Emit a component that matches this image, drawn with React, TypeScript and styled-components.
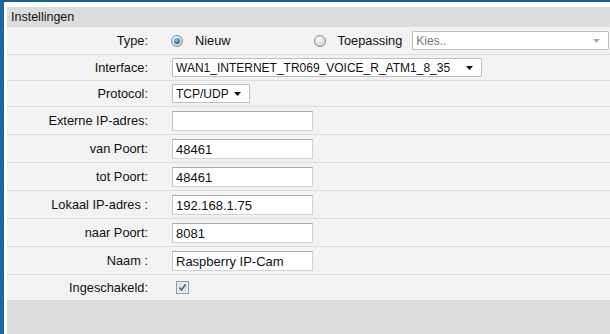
import React from "react";
import styled, { createGlobalStyle } from "styled-components";

const GlobalStyle = createGlobalStyle`
    html, body {
        margin: 0;
        padding: 0;
        background: #fff;
        font-family: Arial, "Liberation Sans", sans-serif;
        font-size: 12.5px;
        color: #111;
    }
`

// form data
const fields = [
    { label: 'Externe IP-adres:', value: '' },
    { label: 'van Poort:', value: '48461' },
    { label: 'tot Poort:', value: '48461' },
    { label: 'Lokaal IP-adres :', value: '192.168.1.75' },
    { label: 'naar Poort:', value: '8081' },
    { label: 'Naam :', value: 'Raspberry IP-Cam' },
]

const Radio = ({ checked }: { checked?: boolean }) => (
    <svg width="12" height="12" viewBox="0 0 12 12">
        <defs>
            <radialGradient id={checked ? "rOn" : "rOff"} cx="0.4" cy="0.35" r="0.7">
                <stop offset="0" stopColor="#ffffff" />
                <stop offset="1" stopColor="#c9c9c9" />
            </radialGradient>
            <radialGradient id="dot" cx="0.4" cy="0.35" r="0.7">
                <stop offset="0" stopColor="#7fd0f5" />
                <stop offset="1" stopColor="#0f5e99" />
            </radialGradient>
        </defs>
        <circle cx="6" cy="6" r="5.5" fill={`url(#${checked ? "rOn" : "rOff"})`} stroke="#8f8f8f" strokeWidth="1" />
        {checked && <circle cx="6" cy="6" r="3" fill="url(#dot)" />}
    </svg>
)

const Caret = ({ color }: { color: string }) => (
    <svg width="7" height="4" viewBox="0 0 7 4">
        <path d="M0 0H7L3.5 4Z" fill={color} />
    </svg>
)

const Check = () => (
    <svg width="13" height="13" viewBox="0 0 13 13">
        <rect x="0.5" y="0.5" width="12" height="12" fill="#e9eef5" stroke="#8e9bb0" />
        <rect x="2" y="2" width="9" height="9" fill="#dde5f0" />
        <path d="M3.5 6.5L5.5 9L9.5 3.5" stroke="#4a6192" strokeWidth="1.6" fill="none" />
    </svg>
)

const App = () => {
    return (
        <>
            <GlobalStyle />
            <Frame>
                <Header>Instellingen</Header>
                <Row height={28}>
                    <Label>Type:</Label>
                    <Control>
                        <RadioItem><Radio checked /><span>Nieuw</span></RadioItem>
                        <RadioItem gap={83}><Radio /><span>Toepassing</span></RadioItem>
                        <Select width={197} muted>
                            <span>Kies..</span>
                            <Caret color="#a8a8a8" />
                        </Select>
                    </Control>
                </Row>
                <Row height={26}>
                    <Label>Interface:</Label>
                    <Control>
                        <Select width={310}>
                            <span>WAN1_INTERNET_TR069_VOICE_R_ATM1_8_35</span>
                            <Caret color="#111" />
                        </Select>
                    </Control>
                </Row>
                <Row height={26}>
                    <Label>Protocol:</Label>
                    <Control>
                        <Select width={78}>
                            <span>TCP/UDP</span>
                            <Caret color="#111" />
                        </Select>
                    </Control>
                </Row>
                {fields.map((item, index) => {
                    return <Row height={28} key={index}>
                        <Label>{item.label}</Label>
                        <Control>
                            <TextInput defaultValue={item.value} />
                        </Control>
                    </Row>
                })}
                <Row height={26}>
                    <Label>Ingeschakeld:</Label>
                    <Control><CheckBox><Check /></CheckBox></Control>
                </Row>
                <Footer />
            </Frame>
        </>
    )
}

const Frame = styled.div`
    border-top: 2px solid #1d5d86;
    border-left: 4px solid #1a6aa0;
    padding: 5px 0 0 3px;
    height: 327px;
    background: #fff;
    display: flex;
    flex-direction: column;
`

const Header = styled.div`
    height: 20px;
    line-height: 20px;
    background: #dcdcdc;
    padding-left: 4px;
    font-size: 12.5px;
    color: #111;
`

const Row = styled.div<{ height: number }>`
    height: ${p => p.height - 1}px;
    border-bottom: 1px solid #dcdcdc;
    background: #f2f2f2;
    display: flex;
    align-items: center;
`

const Label = styled.div`
    flex: 0 0 141px;
    text-align: right;
    font-size: 12.8px;
    color: #111;
`

const Control = styled.div`
    margin-left: 24px;
    display: flex;
    align-items: center;
`

const RadioItem = styled.label<{ gap?: number }>`
    display: flex;
    align-items: center;
    gap: 10px;
    margin-right: ${p => (p.gap ? 10 : 0)}px;
    margin-left: ${p => p.gap ?? -1}px;
    span {
        font-size: 12.8px;
        color: #111;
        margin-left: 2px;
    }
`

const Select = styled.div<{ width: number; muted?: boolean }>`
    box-sizing: border-box;
    flex-shrink: 0;
    width: ${p => p.width}px;
    height: 19px;
    background: #fff;
    border: 1px solid #bdbdbd;
    border-radius: 1px;
    padding: 0 8px 0 3px;
    display: flex;
    align-items: center;
    justify-content: space-between;
    font-size: 12px;
    color: ${p => (p.muted ? '#777' : '#111')};
    span {
        padding-top: 1px;
    }
`

const TextInput = styled.input`
    box-sizing: border-box;
    width: 141px;
    height: 20px;
    margin: 0;
    border: 1px solid #d2d2d2;
    border-top-color: #a9a9a9;
    border-left-color: #c4c4c4;
    padding: 1px 3px 0;
    font-family: Arial, "Liberation Sans", sans-serif;
    font-size: 13px;
    color: #111;
    background: #fff;
    outline: none;
`

const CheckBox = styled.span`
    display: flex;
    margin-left: 4px;
`

const Footer = styled.div`
    flex: 1;
    background: #dcdcdc;
`

export default App
